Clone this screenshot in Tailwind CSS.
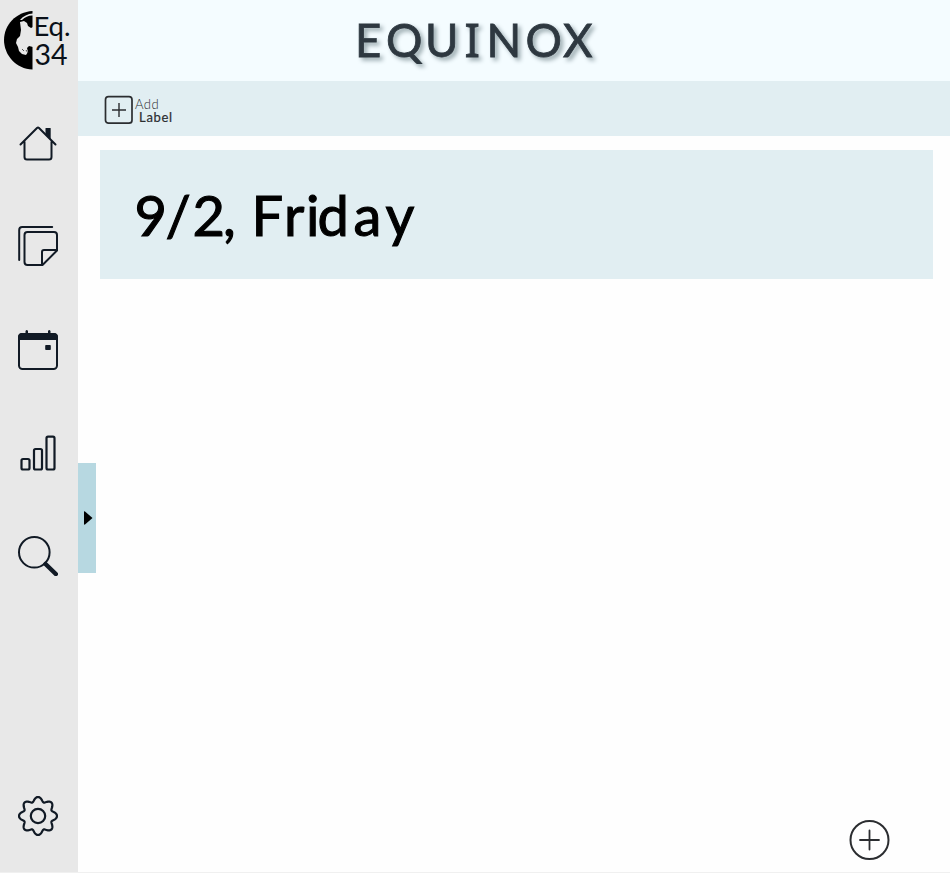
<!DOCTYPE html>
<html lang="en">
<head>
<meta charset="utf-8">
<title>Equinox</title>
<script src="https://cdn.jsdelivr.net/npm/@tailwindcss/browser@4"></script>
</head>
<body class="bg-[#fefefe] font-['Lato',sans-serif]">
<div class="flex h-[873px] w-[950px] overflow-hidden border-b border-[#f0f0f0]">
  <aside class="flex w-[78px] shrink-0 flex-col bg-[#e8e8e8] text-[#111a25]">
    <svg class="h-[80px] w-[78px] shrink-0" viewBox="0 0 78 80">
      <path d="M32.500 11C16 12 4 25 4 40s12 29 28.500 29.500z" fill="#000"/>
      <path d="M20 20Q25 14 33 13.500v2Q27 15 22 20zM20 22l4-1 3 2 1 3 3 2 2-1v20l-4-1-2 2 1 4-2 3-4-1-3-3-1-4-2-4 1-4 3-3 1-6z" fill="#e8e8e8"/>
      <path d="M26 50l2 3M22 49l2 2" stroke="#555" stroke-width="1"/>
      <g font-family="Lato" fill="#0a1018">
        <text y="35.500" font-size="27.500" x="33.500 48.500 64">Eq.</text>
        <text y="65" font-size="28.500" x="34.500 51">34</text>
      </g>
    </svg>
    <nav class="flex flex-1 flex-col items-center pt-[43px] pr-[2px]">
      <svg class="mb-[63px] size-10 shrink-0" viewBox="0 0 40 40" fill="none" stroke="currentColor" stroke-width="2" stroke-linejoin="round" stroke-linecap="round"><path d="M6.500 19v15q0 2.500 2.500 2.500h22q2.500 0 2.500-2.500V19M2.500 21.500 19 5Q20 4 21 5L37.500 21.500"/><path d="M27.500 5.500q0-.5.500-.5h4.200q.5 0 .5.500V17L27.500 12z" fill="currentColor" stroke="none"/></svg>
      <svg class="mb-[64px] size-10 shrink-0" viewBox="0 0 40 40" fill="none" stroke="currentColor" stroke-width="2" stroke-linejoin="round" stroke-linecap="round"><path d="M1.200 34V4q0-3 3-3h30M9.500 6h26.500q3 0 3 3v15.500L24.500 39H9.500q-3 0-3-3V9q0-3 3-3zM38.500 24H26q-2 0-2 2v12.500"/></svg>
      <svg class="mb-[63px] size-10 shrink-0" viewBox="0 0 40 40" fill="none" stroke="currentColor" stroke-width="2"><rect x="1" y="4" width="38" height="35" rx="3.500"/><path d="M0 10V7q0-4 4-4h3.500V1q1.250-2 2.500 0v2h20V1q1.250-2 2.500 0v2H36q4 0 4 4v3zM28 15h4q.8 0 .8.800v3.400q0 .8-.8.800h-4q-.8 0-.8-.8v-3.400q0-.8.800-.8z" fill="currentColor" stroke="none"/></svg>
      <svg class="mb-[63px] size-10 shrink-0" viewBox="0 0 40 40" fill="none" stroke="currentColor" stroke-width="2.200"><rect x="3.500" y="26" width="8" height="10.500" rx="1.500"/><rect x="16" y="16" width="8" height="20.500" rx="1.500"/><rect x="28.500" y="3.700" width="8" height="32.800" rx="1.500"/></svg>
      <svg class="size-10 shrink-0" viewBox="0 0 40 40" fill="none" stroke="currentColor" stroke-width="2"><circle cx="16.300" cy="16.300" r="15.300"/><path d="M27.500 28 37.800 38" stroke-width="4.500" stroke-linecap="round"/></svg>
      <svg class="mt-auto mb-[36px] size-10 shrink-0" viewBox="0 0 40 40" fill="none" stroke="currentColor" stroke-width="2.200"><circle cx="20" cy="20" r="7.200"/><path id="gear" stroke-linejoin="round"/></svg>
    </nav>
  </aside>
  <main class="relative flex flex-1 flex-col">
    <header class="h-[81px] bg-[#f4fcff]">
      <svg class="h-[81px] w-[872px]" viewBox="78 0 872 81" role="heading">
        <g class="drop-shadow-[3px_3px_2px_#9babb0]" fill="#2e3840" stroke="#2e3840" stroke-width="0.800" font-family="Lato" font-size="45.500">
          <text y="57" x="355 386 425 464.500 486.500 525.500 563">EQU<tspan font-family="Noto Sans">I</tspan>NOX</text>
        </g>
      </svg>
    </header>
    <div class="flex h-[55px] items-start bg-[#e1eef2] pt-[14px] pl-[26px] text-[#2b2d30]">
      <svg class="size-[30px]" viewBox="0 0 30 30" fill="none" stroke="currentColor" stroke-width="1.700"><rect x="1.500" y="1.700" width="26.500" height="26.500" rx="3"/><path d="M8 15h14M15 8v14" stroke-width="1.400"/></svg>
      <div class="pt-[3px] pl-px text-[13px] leading-[13px]"><div class="font-light tracking-[0.5px]">Add</div><div class="pl-[4px] tracking-[0.700px] [-webkit-text-stroke:0.2px]">Label</div></div>
    </div>
    <section class="mt-[14px] ml-[22px] h-[129px] w-[833px] bg-[#e1eef2]">
      <svg class="h-[129px] w-[833px]" viewBox="100 150 833 129" role="heading">
        <text y="236" x="134.500 165.500 192.500 223 240 251.500 284 306 317.500 353.500 385.500" fill="#000" stroke="#000" stroke-width="1.100" font-family="Lato" font-size="56">9/2, Friday</text>
      </svg>
    </section>
    <button class="absolute top-[463px] left-0 flex h-[110px] w-[18px] items-center bg-[#b7d8e1] pl-[6px]" aria-label="Expand"><svg class="h-[14px] w-[9px]" viewBox="0 0 9 14"><path d="M0 .5Q0 0 1 .5L8.500 7 1 13.500Q0 14 0 13z"/></svg></button>
    <button class="absolute top-[819px] left-[771px]" aria-label="Add"><svg class="size-[41px]" viewBox="0 0 41 41" fill="none" stroke="#2b2d30" stroke-width="2"><circle cx="20.500" cy="21" r="19"/><path d="M11 21h19M20.500 11.500v19" stroke-width="1.800" stroke-linecap="round"/></svg></button>
  </main>
</div>
<script>
// Eight-lobed gear outline
let d = '';
for (let i = 0; i <= 180; i++) {
  const t = i * Math.PI / 90, r = 16.8 + 2.2 * Math.cos(8 * t);
  const a = t + 0.02 * Math.sin(8 * t);
  d += (i ? 'L' : 'M') + (20 + r * Math.cos(a)).toFixed(2) + ' ' + (20 + r * Math.sin(a)).toFixed(2);
}
document.getElementById('gear').setAttribute('d', d + 'z');
</script>
</body>
</html>
